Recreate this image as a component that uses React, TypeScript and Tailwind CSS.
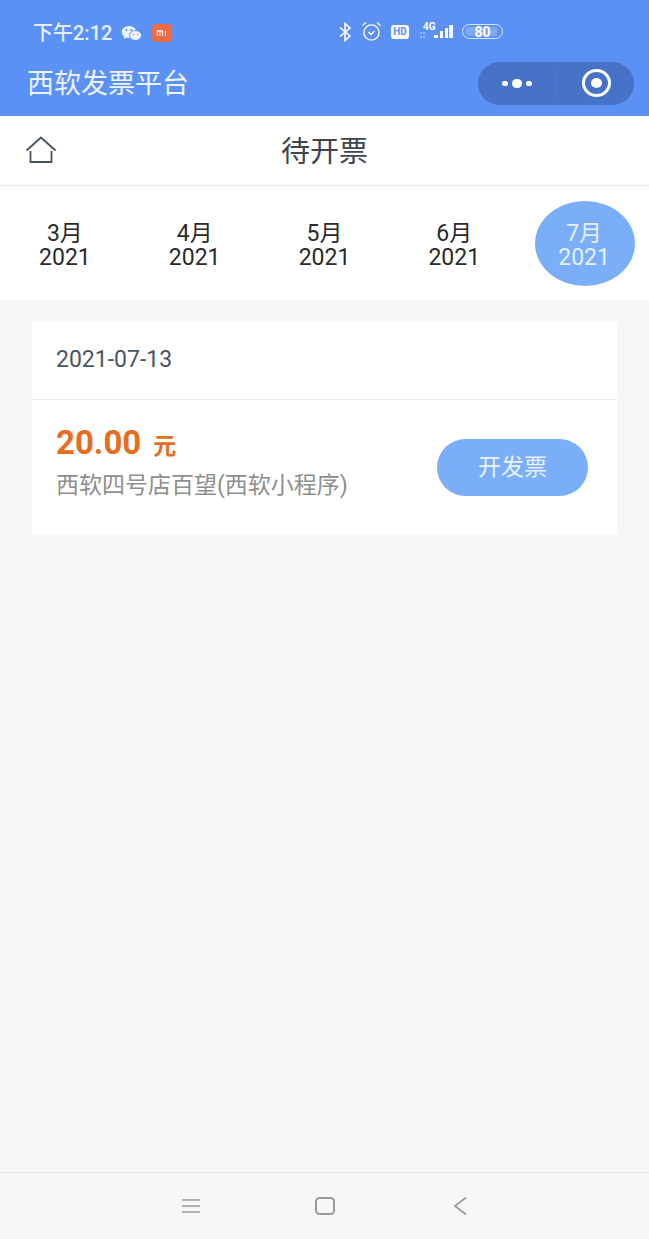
import React from 'react';

const font = "font-['Roboto','Noto_Sans_CJK_SC',sans-serif]";

const months = [
  { m: '3月', active: false },
  { m: '4月', active: false },
  { m: '5月', active: false },
  { m: '6月', active: false },
  { m: '7月', active: true },
];

const WechatIcon = () => (
  <svg width="21" height="17" viewBox="0 0 21 17" fill="#fff" className="opacity-90">
    <ellipse cx="8" cy="7" rx="7.5" ry="6" />
    <path d="M3 11 L3 14 L7 12 Z" />
    <ellipse cx="14.5" cy="10.5" rx="6" ry="5" stroke="#5b90f5" strokeWidth="1" />
    <circle cx="5.5" cy="5" r="1" fill="#5b90f5" />
    <circle cx="10" cy="5" r="1" fill="#5b90f5" />
    <circle cx="12.5" cy="9.5" r="0.8" fill="#e88" />
    <circle cx="16.5" cy="9.5" r="0.8" fill="#e88" />
  </svg>
);

const MiIcon = () => (
  <div className="w-[20px] h-[18px] rounded-[4px] bg-[#ee6a45] flex items-center justify-center">
    <svg width="12" height="6" viewBox="0 0 13 7" fill="none" stroke="#fff" strokeWidth="1.3">
      <path d="M1 7 V1 H7 V7 M4 2 V7 M10.5 1 V7" />
    </svg>
  </div>
);

const StatusRight = () => (
  <div className="flex items-center">
    <svg width="14" height="20" viewBox="0 0 14 20" fill="none" stroke="#fff" strokeWidth="1.6" className="mr-[9px]">
      <path d="M2 5.5 L12 14 L7 18.5 V1.5 L12 6 L2 14.5" />
    </svg>
    <svg width="21" height="21" viewBox="0 0 21 21" fill="none" stroke="#fff" strokeWidth="1.4" className="mr-[9px]">
      <circle cx="10.5" cy="11.5" r="7.6" />
      <path d="M7.5 11 L10 13.5 L13.5 10" />
      <path d="M1.5 4.5 L5 1.5 M19.5 4.5 L16 1.5" />
    </svg>
    <div className="w-[18px] h-[14px] rounded-[3px] bg-white flex items-center justify-center mr-[10px]">
      <span className="text-[10px] leading-none font-bold text-[#5b90f5] font-['Roboto',sans-serif]">HD</span>
    </div>
    <div className="relative w-[36px] h-[20px] mr-[7px]">
      <span className="absolute left-[4px] top-0 text-[10px] leading-[10px] font-bold text-white font-['Roboto',sans-serif]">4G</span>
      <svg width="36" height="20" viewBox="0 0 36 20" fill="#fff" className="absolute inset-0">
        <path d="M1 10 h2 v2 h-2 z M4 10 h2 v2 h-2 z M1 14 h2 v2 h-2 z M4 14 h2 v2 h-2 z" opacity="0.4" />
        <rect x="15" y="13" width="4" height="3" />
        <rect x="21" y="9" width="3" height="7" />
        <rect x="26" y="6" width="3" height="10" />
        <rect x="30" y="3" width="4" height="13" />
      </svg>
    </div>
    <div className="relative w-[41px] h-[15px] rounded-full border border-[#dbe7fe] overflow-hidden flex items-center justify-center">
      <div className="absolute left-[2px] top-[2px] bottom-[2px] w-[32px] rounded-l-full bg-[#7fa9f7]" />
      <span className="relative text-[14px] leading-none font-bold text-white font-['Roboto',sans-serif]">80</span>
    </div>
  </div>
);

export default function App() {
  return (
    <div className={`${font} w-[649px] h-[1239px] flex flex-col bg-[#f7f7f7] overflow-hidden`}>
      {/* blue header with status bar */}
      <div className="h-[116px] bg-[#5b90f5] flex flex-col shrink-0">
        <div className="h-[61px] pt-[21px] pl-[33px] flex items-start">
          <div className="w-[305px] flex items-center h-[24px]">
            <span className="text-[20px] leading-[24px] font-medium text-[#e6effe] w-[88px]">下午2:12</span>
            <WechatIcon />
            <span className="w-[10px]" />
            <MiIcon />
          </div>
          <StatusRight />
        </div>
        <div className="flex items-center justify-between pl-[27px] pr-[15px]">
          <span className="text-[27px] leading-[44px] text-[#eef4ff] translate-y-[1px]">西软发票平台</span>
          <div className="w-[156px] h-[43px] rounded-full bg-[#4673c8] flex items-center">
            <div className="w-[77px] flex items-center justify-center gap-[4px] pl-[1px]">
              <span className="w-[6px] h-[5px] rounded-full bg-white" />
              <span className="w-[10px] h-[9px] rounded-full bg-white" />
              <span className="w-[6px] h-[5px] rounded-full bg-white" />
            </div>
            <div className="w-px h-[27px] bg-[#517fd0]" />
            <div className="flex-1 flex items-center justify-center pl-[2px]">
              <div className="w-[29px] h-[28px] rounded-[50%] border-[3px] border-white flex items-center justify-center">
                <span className="w-[11px] h-[10px] rounded-[50%] bg-white" />
              </div>
            </div>
          </div>
        </div>
      </div>

      {/* title bar */}
      <div className="relative h-[70px] pt-[3px] bg-white border-b border-[#ececec] flex items-center justify-center shrink-0">
        <svg width="32" height="30" viewBox="0 0 32 30" fill="none" stroke="#47525e" strokeWidth="1.8" className="absolute left-[25px] top-[20px]">
          <path d="M1.5 14.5 L16 1.5 L30.5 14.5" />
          <path d="M5.5 15 V26 H26.5 V15" />
        </svg>
        <span className="text-[29px] leading-none text-[#3c4650]">待开票</span>
      </div>

      {/* month picker */}
      <div className="h-[114px] bg-white grid grid-cols-5 shrink-0 items-center">
        {months.map(({ m, active }) => (
          <div key={m} className="flex justify-center">
            <div
              className={
                active
                  ? 'w-[100px] h-[85px] pt-[6px] ml-[2px] pr-[2px] rounded-[50%] bg-[#7baef8] text-[#e6f0fe] flex flex-col items-center justify-center text-[23px] leading-[24px]'
                  : 'w-[100px] h-[85px] pt-[6px] text-[#2a2a2a] flex flex-col items-center justify-center text-[23px] leading-[24px]'
              }
            >
              <span>{m}</span>
              <span>2021</span>
            </div>
          </div>
        ))}
      </div>

      {/* invoice list */}
      <div className="flex-1 px-[32px] pt-[22px]">
        <div className="bg-white">
          <div className="h-[78px] border-b border-[#ececec] flex items-center pl-[24px] text-[23px] text-[#4a5560]">
            2021-07-13
          </div>
          <div className="h-[134px] flex items-center justify-between pl-[24px] pr-[29px]">
            <div className="flex flex-col pb-[12px]">
              <div className="flex items-baseline text-[#e56d1d] font-bold h-[44px]">
                <span className="text-[33px] leading-[44px]">20.00</span>
                <span className="text-[23px] ml-[12px]">元</span>
              </div>
              <span className="text-[23px] leading-[30px] text-[#8e8e8e] mt-[6px]">西软四号店百望(西软小程序)</span>
            </div>
            <div className="w-[151px] h-[57px] pt-[2px] rounded-full bg-[#7baef8] flex items-center justify-center text-[23px] text-[#eaf2fe]">
              开发票
            </div>
          </div>
        </div>
      </div>

      {/* android nav */}
      <div className="h-[67px] border-t border-[#e9e9e9] bg-[#f7f7f7] flex items-center justify-center shrink-0 gap-[114px]">
        <svg width="20" height="14" viewBox="0 0 20 14" fill="none" stroke="#9a9a9a" strokeWidth="1.6">
          <path d="M1 1 H19 M1 7 H19 M1 13 H19" />
        </svg>
        <svg width="20" height="18" viewBox="0 0 20 18" fill="none" stroke="#9a9a9a" strokeWidth="2">
          <rect x="1" y="1" width="18" height="16" rx="3.5" />
        </svg>
        <svg width="20" height="20" viewBox="0 0 20 20" fill="none" stroke="#9a9a9a" strokeWidth="1.8">
          <path d="M17 1.5 L6 10 L17 18.5" />
        </svg>
      </div>
    </div>
  );
}
